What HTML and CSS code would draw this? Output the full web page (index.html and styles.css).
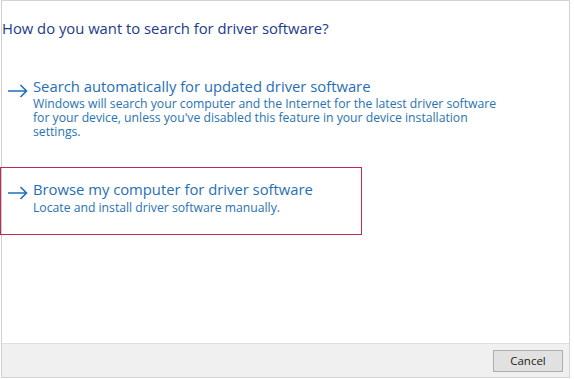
FILE: index.html
```html
<!DOCTYPE html>
<html lang="en">
<head>
  <meta charset="UTF-8" />
  <title>Update Drivers</title>
  <link rel="stylesheet" href="styles.css">
</head>
<body>
  <div class="dialog">
    <div class="content">
      <h1 class="question">How do you want to search for driver software?</h1>

      <!-- option 1 -->
      <div class="option option-auto">
        <span class="arrow">
          <svg width="20" height="14" viewBox="0 0 20 14"><path d="M0 7H18.5M12.5 1L18.5 7L12.5 13" fill="none" stroke="#1f6fc0" stroke-width="1.6"/></svg>
        </span>
        <div class="option-text">
          <div class="option-title">Search automatically for updated driver software</div>
          <div class="option-desc">Windows will search your computer and the Internet for the latest driver software for your device, unless you've disabled this feature in your device installation settings.</div>
        </div>
      </div>

      <!-- option 2 (highlighted) -->
      <div class="option option-browse">
        <span class="arrow">
          <svg width="20" height="14" viewBox="0 0 20 14"><path d="M0 7H18.5M12.5 1L18.5 7L12.5 13" fill="none" stroke="#1f6fc0" stroke-width="1.6"/></svg>
        </span>
        <div class="option-text">
          <div class="option-title">Browse my computer for driver software</div>
          <div class="option-desc">Locate and install driver software manually.</div>
        </div>
      </div>
    </div>

    <div class="footer">
      <button class="btn">Cancel</button>
    </div>
  </div>
</body>
</html>
```

FILE: styles.css
```css
/* ===== dialog frame ===== */
body {
  margin: 0;
  padding: 0;
  background: #fff;
  font-family: "Open Sans", "Noto Sans", sans-serif;
}

.dialog {
  width: 569px;
  height: 378px;
  margin-left: 1px;
  border: 1px solid #d4d4d4;
  border-left-color: #cfcfcf;
  display: flex;
  flex-direction: column;
  box-sizing: border-box;
}

.content {
  flex: 1;
  padding-top: 16px;
}

/* question heading */
.question {
  margin: 0;
  font-size: 14.8px;
  font-weight: normal;
  color: #1b3a8c;
  line-height: 22px;
}

/* options */
.option {
  display: flex;
  align-items: flex-start;
  padding-left: 6px;
}
.option-auto {
  margin-top: 38px;
}
.option-auto .option-title {
  line-height: 18px;
}
.option-auto .option-desc {
  margin-top: 2px;
}
.option-browse {
  width: 362px;
  height: 68px;
  margin-top: 28px;
  margin-left: -2px;
  padding-left: 7px;
  padding-top: 11px;
  border: 1px solid #c1294d;
  box-sizing: border-box;
}
.option-browse .option-desc {
  margin-top: 2px;
}

.arrow {
  width: 25px;
  padding-top: 4px;
  flex-shrink: 0;
}

.option-title {
  font-size: 14.8px;
  color: #1f6fb8;
  line-height: 20px;
}
.option-desc {
  font-size: 12.2px;
  color: #2872b5;
  line-height: 14px;
  width: 475px;
}

/* bottom bar */
.footer {
  height: 33px;
  background: #f0f0f0;
  border-top: 1px solid #dfdfdf;
  display: flex;
  justify-content: flex-end;
  align-items: center;
  padding-right: 6px;
}
.btn {
  width: 70px;
  height: 22px;
  padding: 0;
  background: #e1e1e1;
  border: 1px solid #adadad;
  font-family: "Open Sans", "Noto Sans", sans-serif;
  font-size: 11.5px;
  color: #222;
}
```
